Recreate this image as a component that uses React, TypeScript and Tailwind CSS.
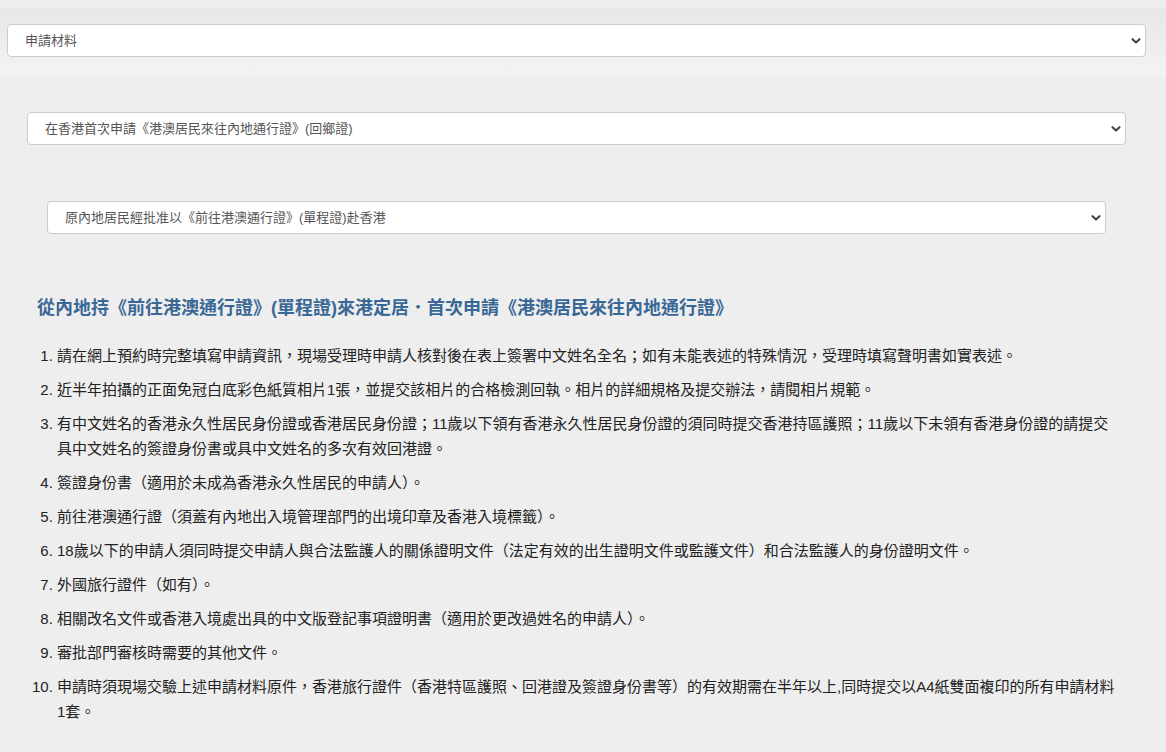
import type { ReactNode } from "react";

const font = {
  fontFamily: '"Liberation Sans", "Noto Sans CJK TC", sans-serif',
};

function Select({ label, className = "" }: { label: string; className?: string }) {
  return (
    <div className={`relative h-[33px] rounded-[4px] border border-[#cccccc] bg-white ${className}`}>
      <div className="flex h-full items-center pl-[17px] text-[13px] text-[#555555]">{label}</div>
      <svg
        aria-hidden
        className="absolute right-[4px] top-1/2 h-[8px] w-[10px] -translate-y-1/2"
        viewBox="0 0 10 8"
        fill="none"
      >
        <path d="M1.5 2.2 L5 5.6 L8.5 2.2" stroke="#444444" strokeWidth="2.1" strokeLinecap="round" strokeLinejoin="round" />
      </svg>
    </div>
  );
}

const items: ReactNode[] = [
  "請在網上預約時完整填寫申請資訊，現場受理時申請人核對後在表上簽署中文姓名全名；如有未能表述的特殊情況，受理時填寫聲明書如實表述。",
  "近半年拍攝的正面免冠白底彩色紙質相片1張，並提交該相片的合格檢測回執。相片的詳細規格及提交辦法，請閱相片規範。",
  "有中文姓名的香港永久性居民身份證或香港居民身份證；11歲以下領有香港永久性居民身份證的須同時提交香港持區護照；11歲以下未領有香港身份證的請提交具中文姓名的簽證身份書或具中文姓名的多次有效回港證。",
  "簽證身份書（適用於未成為香港永久性居民的申請人）。",
  "前往港澳通行證（須蓋有內地出入境管理部門的出境印章及香港入境標籤）。",
  "18歲以下的申請人須同時提交申請人與合法監護人的關係證明文件（法定有效的出生證明文件或監護文件）和合法監護人的身份證明文件。",
  "外國旅行證件（如有）。",
  "相關改名文件或香港入境處出具的中文版登記事項證明書（適用於更改過姓名的申請人）。",
  "審批部門審核時需要的其他文件。",
  "申請時須現場交驗上述申請材料原件，香港旅行證件（香港特區護照、回港證及簽證身份書等）的有效期需在半年以上,同時提交以A4紙雙面複印的所有申請材料1套。",
];

export default function App() {
  return (
    <div className="min-h-[752px] bg-[#eeeeee]" style={font}>
      <div className="h-[8px] bg-[#ededed]" />
      <div className="bg-gradient-to-b from-[#e7e7e7] to-[#f3f3f3] px-[7px] pb-[20px] pt-[16px] pr-[20px]">
        <Select label="申請材料" />
      </div>
      <div className="px-[27px] pr-[40px] pt-[35px]">
        <Select label="在香港首次申請《港澳居民來往內地通行證》(回鄉證)" />
        <div className="px-[20px] pt-[56px]">
          <Select label="原內地居民經批准以《前往港澳通行證》(單程證)赴香港" />
        </div>
      </div>
      <div className="pl-[37px] pr-[46px] pt-[62px]">
        <h2 className="text-[18px] font-bold leading-[24px] text-[#3a6896]">
          從內地持《前往港澳通行證》(單程證)來港定居．首次申請《港澳居民來往內地通行證》
        </h2>
        <ol className="mt-[23px] list-decimal pl-[20px] text-[15px] leading-[25px] text-[#222222]">
          {items.map((item, i) => (
            <li key={i} className="mb-[9px] pl-[0px]">
              {item}
            </li>
          ))}
        </ol>
      </div>
    </div>
  );
}
